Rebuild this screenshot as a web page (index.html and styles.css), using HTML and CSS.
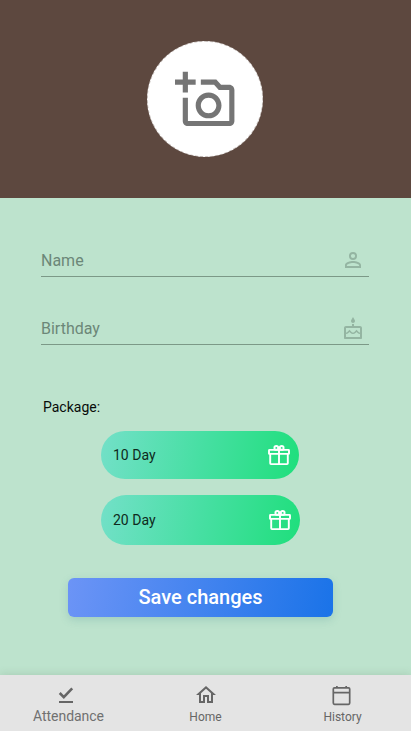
FILE: index.html
```html
<!DOCTYPE html>
<html lang="en">
<head>
<meta charset="utf-8">
<title>Profile</title>
<link rel="stylesheet" href="styles.css">
</head>
<body>
<div class="screen">
  <header class="hero">
    <div class="avatar">
      <svg width="62" height="62" viewBox="0 -0.1 24 24" fill="currentColor"><path d="M21 6h-3.170L16 4h-6v2h5.120l1.830 2H21v12H5v-9H3v9c0 1.100.9 2 2 2h16c1.100 0 2-.9 2-2V8c0-1.100-.9-2-2-2zM8 14c0 2.760 2.240 5 5 5s5-2.240 5-5-2.240-5-5-5-5 2.240-5 5zm5-3c1.650 0 3 1.350 3 3s-1.350 3-3 3-3-1.350-3-3 1.350-3 3-3zM5 6h3V4H5V1H3v3H0v2h3v3h2z"/></svg>
    </div>
  </header>
  <main class="content">
    <div class="field">
      <span class="field-label">Name</span>
      <svg class="field-icon" width="24" height="24" viewBox="0 0 24 24" fill="currentColor"><path d="M12 5.9a2.1 2.1 0 1 1 0 4.2 2.1 2.1 0 0 1 0-4.2m0 9c2.97 0 6.1 1.46 6.1 2.1v1.1H5.900V17c0-.64 3.130-2.1 6.100-2.100M12 4a4 4 0 1 0 0 8 4 4 0 0 0 0-8zm0 9c-2.670 0-8 1.340-8 4v3h16v-3c0-2.660-5.330-4-8-4z"/></svg>
    </div>
    <div class="field">
      <span class="field-label">Birthday</span>
      <svg class="field-icon" width="24" height="24" viewBox="0 -1 24 24" fill="currentColor"><path d="M12 6c1.110 0 2-.9 2-2 0-.38-.1-.73-.29-1.030L12 0l-1.710 2.970c-.19.3-.29.65-.29 1.030 0 1.100.9 2 2 2zm7 3h-6V7h-2v2H5c-1.100 0-2 .9-2 2v10c0 .55.45 1 1 1h16c.55 0 1-.45 1-1V11c0-1.100-.9-2-2-2zm0 11H5v-3c.9-.01 1.760-.37 2.400-1.010l1.090-1.070 1.070 1.070c1.310 1.310 3.590 1.300 4.890 0l1.080-1.070 1.070 1.070c.64.64 1.500 1 2.400 1.010v3zm0-4.500c-.51-.01-.99-.2-1.350-.57l-2.130-2.130-2.140 2.130c-.74.74-2.030.74-2.770 0L8.480 12.800l-2.140 2.130c-.35.36-.83.56-1.340.57V11h14v4.500z"/></svg>
    </div>
    <p class="package-title">Package:</p>
    <div class="packages">
      <div class="package package-small">
        <span>10 Day</span>
        <svg width="24" height="24" viewBox="0 0 24 24" fill="none" stroke="currentColor" stroke-width="1.900"><rect x="2" y="6.900" width="20" height="4" rx=".5"/><path d="M3.200 11v9.300q0 .8.800.8h16q.8 0 .8-.8V11M12 7v14"/><circle cx="9.300" cy="4.900" r="1.900"/><circle cx="14.700" cy="4.900" r="1.900"/></svg>
      </div>
      <div class="package package-large">
        <span>20 Day</span>
        <svg width="24" height="24" viewBox="0 0 24 24" fill="none" stroke="currentColor" stroke-width="1.900"><rect x="2" y="6.900" width="20" height="4" rx=".5"/><path d="M3.200 11v9.300q0 .8.800.8h16q.8 0 .8-.8V11M12 7v14"/><circle cx="9.300" cy="4.900" r="1.900"/><circle cx="14.700" cy="4.900" r="1.900"/></svg>
      </div>
    </div>
    <button class="save">Save changes</button>
  </main>
  <nav class="tabs">
    <div class="tab tab-attendance">
      <svg width="24" height="24" viewBox="0 0 24 24" fill="none" stroke="currentColor"><path stroke-width="2.600" d="M5.700 10l4.100 4.100 8.400-8.700"/><path stroke-width="2" d="M5 19h14"/></svg>
      <span>Attendance</span>
    </div>
    <div class="tab">
      <svg width="24" height="24" viewBox="0 0 24 24" fill="currentColor"><path d="M12 5.690l5 4.500V18h-2v-6H9v6H7v-7.810l5-4.500M12 3L2 12h3v8h6v-6h2v6h6v-8h3L12 3z"/></svg>
      <span>Home</span>
    </div>
    <div class="tab tab-history">
      <svg width="24" height="24" viewBox="0 0 24 24" fill="none" stroke="currentColor" stroke-width="1.700"><rect x="4.300" y="4.900" width="16.400" height="16.400" rx="1.200"/><path d="M4.300 9.700h16.400M7.900 2.900v2M17.200 2.900v2"/></svg>
      <span>History</span>
    </div>
  </nav>
</div>
</body>
</html>
```
FILE: styles.css
```css
* {
  box-sizing: border-box;
}

body {
  margin: 0;
  font-family: Roboto, "Liberation Sans", sans-serif;
}

svg {
  display: block;
  flex: none;
}

.screen {
  width: 411px;
  height: 731px;
  display: flex;
  flex-direction: column;
  background: #bde3cd;
  overflow: hidden;
}

.hero {
  height: 198px;
  flex: none;
  display: flex;
  justify-content: center;
  align-items: center;
  padding-right: 1px;
  background: #5d483f;
}

.avatar {
  width: 116px;
  height: 116px;
  display: flex;
  align-items: center;
  padding: 2px 0 0 27px;
  border: 1px dashed #d0cac7;
  border-radius: 50%;
  background: #fff;
  color: #757575;
}

.content {
  flex: 1;
  display: flex;
  flex-direction: column;
  padding: 43px 42px 0 41px;
}

.field {
  height: 36px;
  flex: none;
  display: flex;
  justify-content: space-between;
  align-items: center;
  margin-bottom: 32px;
  padding: 3px 4px 0 0;
  border-bottom: 1px solid #7c9987;
  font-size: 16px;
  color: #6c8778;
}

.field-icon {
  color: #94b5a2;
}

.package-title {
  margin: 21px 0 0 2px;
  font-size: 14px;
  line-height: 18px;
  color: #080c0a;
}

.packages {
  display: flex;
  flex-direction: column;
  gap: 16px;
  margin: 15px 0 0 60px;
}

.package {
  display: flex;
  justify-content: space-between;
  align-items: center;
  padding: 0 8px 0 12px;
  border-radius: 25px;
  background: linear-gradient(100deg, #73e0c8, #47dfa3 50%, #1fdf7c);
  font-size: 14px;
  color: #0e2a20;
}

.package svg {
  color: #fff;
}

.package-small {
  width: 198px;
  height: 48px;
}

.package-large {
  width: 199px;
  height: 50px;
}

.save {
  width: 265px;
  height: 39px;
  margin: 33px 0 0 27px;
  padding: 0;
  border: 0;
  border-radius: 6px;
  background: linear-gradient(100deg, #6c94f6, #1a73e8);
  box-shadow: 0 3px 8px rgba(60, 130, 140, 0.22);
  font: 500 20px/39px Roboto, "Liberation Sans", sans-serif;
  color: #fff;
}

.tabs {
  height: 56px;
  flex: none;
  display: grid;
  grid-template-columns: repeat(3, 1fr);
  background: #e4e4e4;
  box-shadow: 0 -1px 8px rgba(80, 110, 80, 0.18);
  color: #666;
}

.tab {
  display: flex;
  flex-direction: column;
  align-items: center;
  padding-top: 8px;
  font-size: 12px;
  line-height: 20px;
}

.tab-attendance {
  font-size: 14px;
  line-height: 18px;
  letter-spacing: -0.05px;
  color: #707070;
}

.tab-attendance svg {
  margin-right: 5px;
  color: #666;
}

.tab-history svg {
  margin-right: 3px;
}
```
